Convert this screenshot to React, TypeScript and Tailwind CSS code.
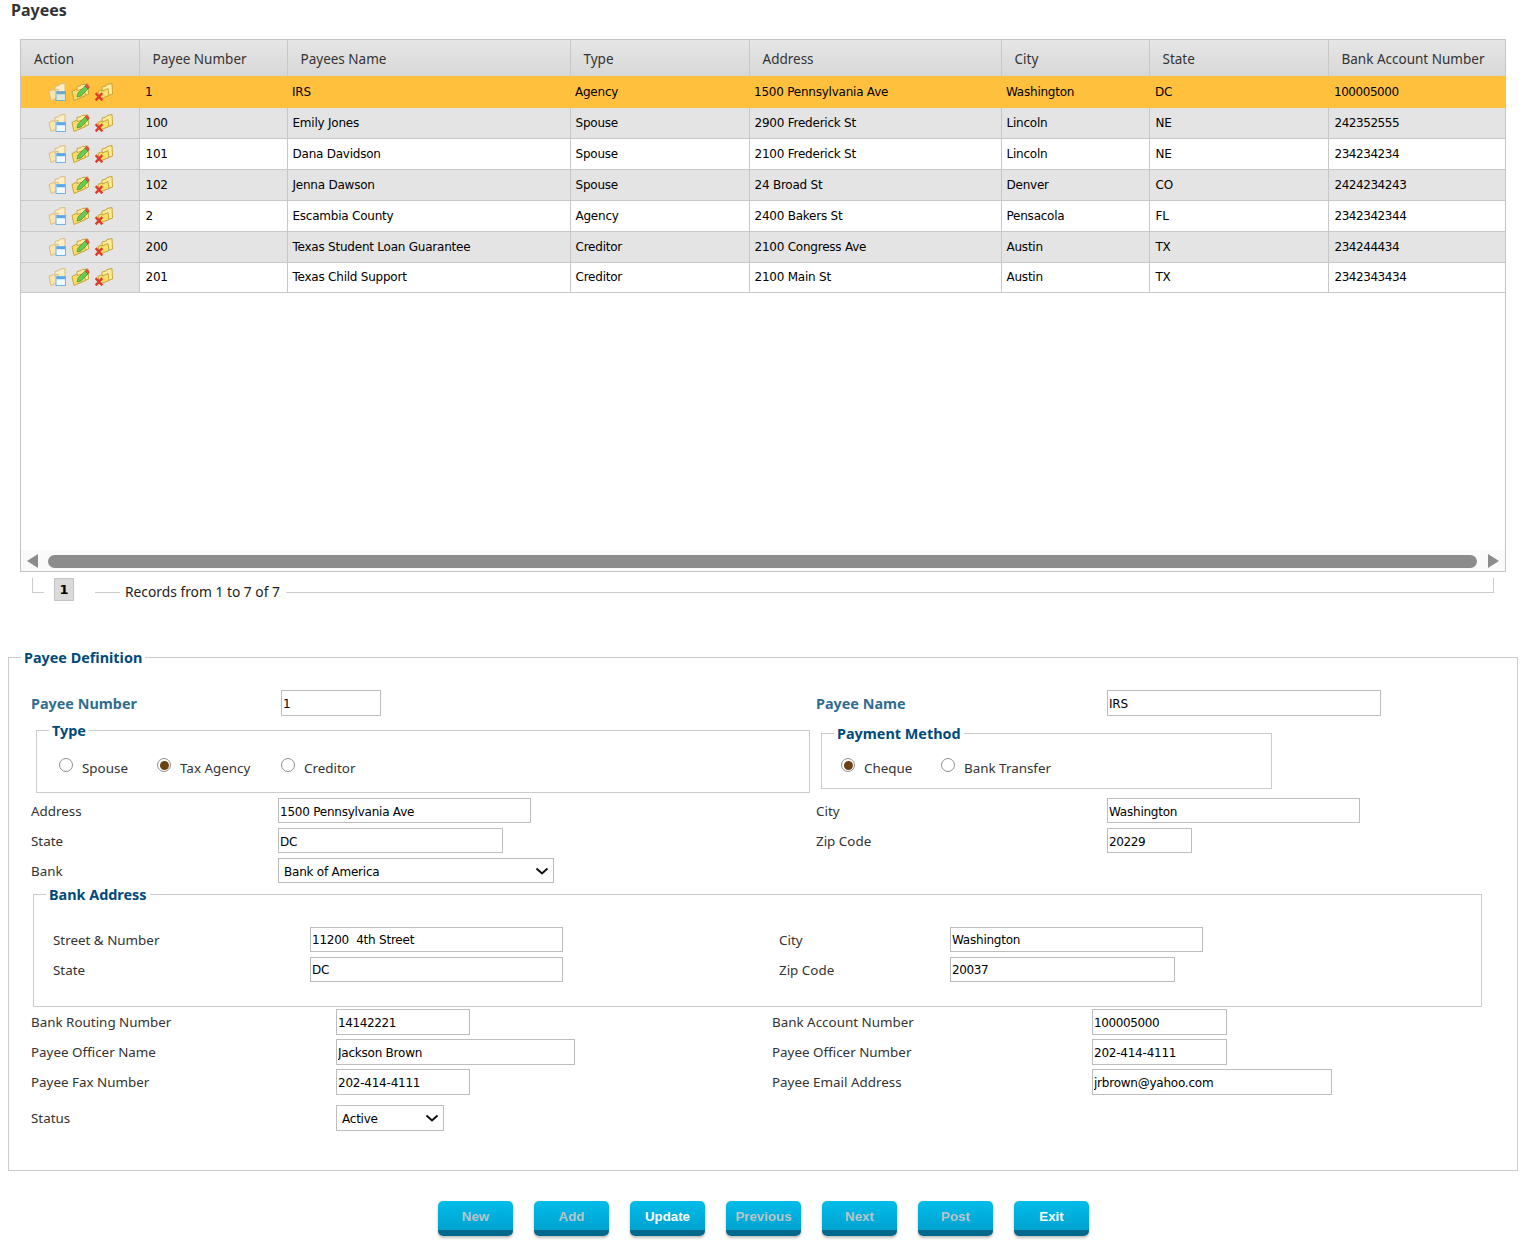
import React from "react";

const rows = [
  ["1", "IRS", "Agency", "1500 Pennsylvania Ave", "Washington", "DC", "100005000"],
  ["100", "Emily Jones", "Spouse", "2900 Frederick St", "Lincoln", "NE", "242352555"],
  ["101", "Dana Davidson", "Spouse", "2100 Frederick St", "Lincoln", "NE", "234234234"],
  ["102", "Jenna Dawson", "Spouse", "24 Broad St", "Denver", "CO", "2424234243"],
  ["2", "Escambia County", "Agency", "2400 Bakers St", "Pensacola", "FL", "2342342344"],
  ["200", "Texas Student Loan Guarantee", "Creditor", "2100 Congress Ave", "Austin", "TX", "234244434"],
  ["201", "Texas Child Support", "Creditor", "2100 Main St", "Austin", "TX", "2342343434"],
];
const heads = ["Action", "Payee Number", "Payees Name", "Type", "Address", "City", "State", "Bank Account Number"];
const widths = [118, 148, 283, 179, 252, 148, 179, 177];

function ViewIcon({ active }: { active: boolean }) {
  return (
    <svg width="18" height="18" viewBox="0 0 18 18" className="block">
      <path d="M7 7 L7 3.5 L11 2.5 L12 1 L17 0.5 L17 10 L9 15 Z" fill="#fbeec8" stroke="#d8bd7c" strokeWidth="1" />
      <path d="M1 8.5 L5 6.5 L6.5 7.5 L10 6 L11 14 L3 17.5 Z" fill="#f8e6b2" stroke="#d8bd7c" strokeWidth="1" />
      <rect x="8" y="8.5" width="9.5" height="9" fill={active ? "#dfe6d6" : "#f2f8ff"} stroke={active ? "#79b3c9" : "#6fb3e8"} strokeWidth="1" />
      <rect x="8.5" y="9" width="8.5" height="2.2" fill={active ? "#6fa8c8" : "#58a8ee"} />
    </svg>
  );
}
function EditIcon() {
  return (
    <svg width="19" height="18" viewBox="0 0 19 18" className="block">
      <path d="M6 6 L6 3.5 L10 2.5 L11 1.5 L17 1 L17.5 11 L8 15 Z" fill="#fdec9a" stroke="#c9a238" strokeWidth="1" />
      <path d="M1 8.5 L5 6.5 L6.5 7.5 L13 5.5 L14.5 12.5 L3 17.5 Z" fill="#f9dd6c" stroke="#c9a238" strokeWidth="1" />
      <path d="M6 14 L7 10 L14 3 L17 6 L10 13 Z" fill="#6cc850" stroke="#3a9a30" strokeWidth="0.7" />
      <path d="M14 3 L15.5 1 L18.5 4 L17 6 Z" fill="#e0524a" stroke="#b53a33" strokeWidth="0.5" />
    </svg>
  );
}
function DeleteIcon() {
  return (
    <svg width="18" height="18" viewBox="0 0 18 18" className="block">
      <path d="M7 6 L7 4 L11 3 L12 1.5 L17 0.5 L17.5 11 L9 14 Z" fill="#fdec9a" stroke="#c9a238" strokeWidth="1" />
      <path d="M3 8.5 L6 7 L7.5 8 L13 5.5 L14 12.5 L5 16 Z" fill="#fbe06a" stroke="#c9a238" strokeWidth="1" />
      <path d="M1.5 11 L6.5 16.5 M6.5 11 L1.5 16.5" stroke="#e03a2a" strokeWidth="2.4" strokeLinecap="square" />
    </svg>
  );
}

function Input({ value, w, h = 25, low }: { value: string; w: number; h?: number; low?: boolean }) {
  return (
    <input
      readOnly
      value={value}
      style={{ width: w, height: h }}
      className={
        "border border-[#bdbdbd] bg-white pl-[1px] font-['DejaVu_Sans',sans-serif] text-[12px] text-black outline-none " +
        (low ? "pt-[2px] " : "pt-[1px] ") +
        (/^\d+$/.test(value) ? "tracking-[-0.4px]" : "tracking-[-0.23px]")
      }
    />
  );
}

function Field({ label, labelW, value, w, h = 25, strong, low }: { label: string; labelW: number; value: string; w: number; h?: number; strong?: boolean; low?: boolean }) {
  return (
    <div className="flex items-center" style={{ height: h }}>
      <span
        style={{ width: labelW }}
        className={
          strong
            ? "shrink-0 pt-[1px] text-[14.4px] font-bold text-[#336d8e]"
            : h === 25
              ? "shrink-0 pt-[2px] text-[13.4px] text-[#333333]"
              : "shrink-0 text-[13.4px] text-[#333333]"
        }
      >
        {label}
      </span>
      <Input value={value} w={w} h={h} low={low} />
    </div>
  );
}

function Select({ value, w, h = 25 }: { value: string; w: number; h?: number }) {
  return (
    <div className="relative" style={{ width: w, height: h }}>
      <select
        value={value}
        onChange={() => {}}
        style={{ width: w, height: h }}
        className="appearance-none border border-[#bdbdbd] bg-white pl-[5px] pt-[2px] font-['DejaVu_Sans',sans-serif] text-[12px] tracking-[-0.23px] text-black outline-none"
      >
        <option>{value}</option>
      </select>
      <svg width="14" height="8" viewBox="0 0 14 8" className="pointer-events-none absolute right-[5px] top-[9px]">
        <path d="M1.5 1.5 L7 6.5 L12.5 1.5" fill="none" stroke="#111111" strokeWidth="2" />
      </svg>
    </div>
  );
}

function Radio({ label, checked, w }: { label: string; checked?: boolean; w: number }) {
  return (
    <div className="flex items-center gap-[9px]" style={{ width: w }}>
      <span className="mb-[6px] flex h-[14px] w-[14px] items-center justify-center rounded-full border-[1.5px] border-[#8f8f8f] bg-white">
        {checked && <span className="h-[9px] w-[9px] rounded-full bg-[#6b4313]" />}
      </span>
      <span className="text-[13.4px] text-[#333333]">{label}</span>
    </div>
  );
}

function Legend({ children, ml }: { children: React.ReactNode; ml: string }) {
  return <legend className={ml + " mb-[2px] h-[14px] px-[3px] text-[14.4px] font-bold leading-[16px] text-[#004a7c]"}>{children}</legend>;
}

function Button({ label, on }: { label: string; on?: boolean }) {
  return (
    <button
      className={
        "h-[35px] w-[75px] rounded-[5px] border-b-[6px] border-[#006a8e] bg-gradient-to-b from-[#00bdea] to-[#00a2cf] pt-[2px] font-['Liberation_Sans',sans-serif] text-[13.3px] font-bold shadow-[0_2px_3px_rgba(0,0,0,0.25)] " +
        (on ? "text-white" : "text-[#b9c4c9]")
      }
    >
      {label}
    </button>
  );
}

export default function App() {
  return (
    <div className="w-[1525px] bg-white font-['Noto_Sans',sans-serif] text-[12px] text-black">
      <div className="h-[39px] pl-[11px] text-[16px] font-bold leading-[21px] text-[#333333]">Payees</div>

      <div className="mx-[20px] flex h-[533px] w-[1486px] flex-col border border-[#c4c4c4]">
        <table className="table-fixed border-collapse" style={{ width: 1484 }}>
          <colgroup>
            {widths.map((w, i) => (
              <col key={i} style={{ width: w }} />
            ))}
          </colgroup>
          <thead>
            <tr className="h-[36px] bg-gradient-to-b from-[#e6e6e6] to-[#d8d8d8]">
              {heads.map((h) => (
                <th key={h} className="border-r border-[#c8c8c8] pl-[13px] pt-[2px] text-left text-[13.5px] font-normal text-[#333333] last:border-r-0">
                  {h}
                </th>
              ))}
            </tr>
          </thead>
          <tbody>
            {rows.map((r, i) => {
              const sel = i === 0;
              const bg = sel ? "bg-[#ffc03e]" : i % 2 === 0 ? "bg-white" : "bg-[#e4e4e4]";
              const h = i === rows.length - 1 ? "h-[30px] " : "h-[31px] ";
              return (
                <tr key={r[0]} className={h + bg}>
                  <td className={(sel ? "border-b border-[#ffc03e] bg-[#ffc03e] pt-[1px] " : "border-r border-b border-[#c8c8c8] bg-[#e4e4e4] ") + "pl-[27px]"}>
                    <div className="flex items-center gap-[5px]">
                      <ViewIcon active={sel} />
                      <EditIcon />
                      <DeleteIcon />
                    </div>
                  </td>
                  {r.map((c, j) => (
                    <td
                      key={j}
                      className={
                        (sel ? "border-b border-[#ffc03e] pt-[2px] " : "border-r border-b border-[#c8c8c8] last:border-r-0 ") +
                        (j === 6 ? "tracking-[-0.45px] " : "tracking-[-0.23px] ") +
                        (j === 0 || j >= 5 ? "pl-[6px] " : "pl-[5px] ") +
                        "truncate font-['DejaVu_Sans',sans-serif] text-[12px] text-black"
                      }
                    >
                      {c}
                    </td>
                  ))}
                </tr>
              );
            })}
          </tbody>
        </table>
        <div className="flex-1" />
        <div className="flex h-[21px] items-center bg-[#fafafa] pl-[6px] pr-[6px] pt-[1px]">
          <svg width="11" height="14" viewBox="0 0 11 14"><path d="M11 0 L11 14 L0 7 Z" fill="#8c8c8c" /></svg>
          <div className="ml-[10px] mr-[11px] h-[13px] flex-1 rounded-full bg-[#8c8c8c]" />
          <svg width="11" height="14" viewBox="0 0 11 14"><path d="M0 0 L0 14 L11 7 Z" fill="#8c8c8c" /></svg>
        </div>
      </div>

      <div className="ml-[32px] mt-[6px] flex h-[24px] w-[1462px] items-start">
        <div className="h-[15px] w-[12px] border-b border-l border-[#cccccc]" />
        <div className="ml-[10px] flex h-[23px] w-[20px] items-center justify-center border border-[#c4c4c4] bg-[#dadada] font-['DejaVu_Sans',sans-serif] text-[13px] font-bold">1</div>
        <div className="ml-[21px] h-[15px] w-[25px] border-b border-[#cccccc]" />
        <span className="ml-[5px] mt-[5px] text-[13.8px] leading-[18px] text-[#222222]">Records from 1 to 7 of 7</span>
        <div className="ml-[6px] h-[15px] flex-1 border-b border-r border-[#cccccc]" />
      </div>

      <fieldset className="ml-[8px] mt-[48px] h-[521px] w-[1510px] border border-[#cccccc] pl-[22px]">
        <Legend ml="ml-[-10px]">Payee Definition</Legend>

        <div className="mt-[24px] flex h-[26px]">
          <div className="w-[785px]">
            <Field strong label="Payee Number" labelW={250} value="1" w={100} h={26} />
          </div>
          <Field strong label="Payee Name" labelW={291} value="IRS" w={274} h={26} />
        </div>

        <div className="mt-[7px] flex h-[70px] items-start">
          <fieldset className="ml-[5px] h-[70px] w-[774px] border border-[#cccccc]">
            <Legend ml="ml-[12px]">Type</Legend>
            <div className="mt-[19px] flex h-[20px] pl-[22px]">
              <Radio label="Spouse" w={98} />
              <Radio label="Tax Agency" checked w={124} />
              <Radio label="Creditor" w={100} />
            </div>
          </fieldset>
          <fieldset className="ml-[11px] mt-[3px] h-[63px] w-[451px] border border-[#cccccc]">
            <Legend ml="ml-[12px]">Payment Method</Legend>
            <div className="mt-[16px] flex h-[20px] pl-[19px]">
              <Radio label="Cheque" checked w={100} />
              <Radio label="Bank Transfer" w={130} />
            </div>
          </fieldset>
        </div>

        <div className="mt-[5px] flex flex-col gap-[5px]">
          <div className="flex">
            <div className="w-[785px]"><Field low label="Address" labelW={247} value="1500 Pennsylvania Ave" w={253} /></div>
            <Field low label="City" labelW={291} value="Washington" w={253} />
          </div>
          <div className="flex">
            <div className="w-[785px]"><Field low label="State" labelW={247} value="DC" w={225} /></div>
            <Field low label="Zip Code" labelW={291} value="20229" w={85} />
          </div>
          <div className="flex h-[25px] items-center">
            <span className="w-[247px] shrink-0 pt-[2px] text-[13.4px] text-[#333333]">Bank</span>
            <Select value="Bank of America" w={276} />
          </div>
        </div>

        <fieldset className="ml-[2px] mt-[4px] h-[120px] w-[1449px] border border-[#cccccc] pl-[19px]">
          <Legend ml="ml-[-7px]">Bank Address</Legend>
          <div className="mt-[24px] flex flex-col gap-[5px]">
            <div className="flex">
              <div className="w-[726px]"><Field label="Street & Number" labelW={257} value="11200  4th Street" w={253} /></div>
              <Field label="City" labelW={171} value="Washington" w={253} />
            </div>
            <div className="flex">
              <div className="w-[726px]"><Field label="State" labelW={257} value="DC" w={253} /></div>
              <Field label="Zip Code" labelW={171} value="20037" w={225} />
            </div>
          </div>
        </fieldset>

        <div className="mt-[2px] flex flex-col gap-[4px]">
          <div className="flex">
            <div className="w-[741px]"><Field label="Bank Routing Number" labelW={305} value="14142221" w={134} h={26} /></div>
            <Field label="Bank Account Number" labelW={320} value="100005000" w={135} h={26} />
          </div>
          <div className="flex">
            <div className="w-[741px]"><Field label="Payee Officer Name" labelW={305} value="Jackson Brown" w={239} h={26} /></div>
            <Field label="Payee Officer Number" labelW={320} value="202-414-4111" w={135} h={26} />
          </div>
          <div className="flex">
            <div className="w-[741px]"><Field label="Payee Fax Number" labelW={305} value="202-414-4111" w={134} h={26} /></div>
            <Field label="Payee Email Address" labelW={320} value="jrbrown@yahoo.com" w={240} h={26} />
          </div>
        </div>

        <div className="mt-[10px] flex h-[26px] items-center">
          <span className="w-[305px] shrink-0 text-[13.4px] text-[#333333]">Status</span>
          <Select value="Active" w={108} h={26} />
        </div>
      </fieldset>

      <div className="ml-[438px] mt-[30px] flex gap-[21px] pb-[10px]">
        <Button label="New" />
        <Button label="Add" />
        <Button label="Update" on />
        <Button label="Previous" />
        <Button label="Next" />
        <Button label="Post" />
        <Button label="Exit" on />
      </div>
    </div>
  );
}
